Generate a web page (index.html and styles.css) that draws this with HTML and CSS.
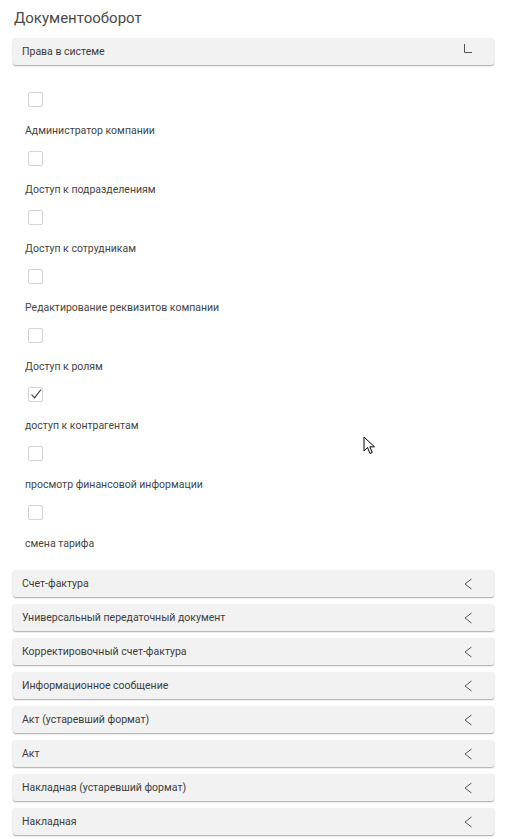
FILE: index.html
```html
<!DOCTYPE html>
<html lang="ru">
<head>
<meta charset="utf-8">
<link rel="stylesheet" href="styles.css">
</head>
<body>
<div class="page">
  <h1 class="title">Документооборот</h1>
  <div class="panel open">
    <div class="bar">
      <span class="bar-text">Права в системе</span>
      <svg class="icon" width="12" height="14" viewBox="0 0 12 14"><path d="M2.5 3 V11.5 H10" fill="none" stroke="#555" stroke-width="1"/></svg>
    </div>
    <div class="list">
      <div class="item"><span class="cb"></span><span class="label">Администратор компании</span></div>
      <div class="item"><span class="cb"></span><span class="label">Доступ к подразделениям</span></div>
      <div class="item"><span class="cb"></span><span class="label">Доступ к сотрудникам</span></div>
      <div class="item"><span class="cb"></span><span class="label">Редактирование реквизитов компании</span></div>
      <div class="item"><span class="cb"></span><span class="label">Доступ к ролям</span></div>
      <div class="item"><span class="cb checked"><svg width="14" height="14" viewBox="0 0 14 14"><path d="M2.5 7.5 L5.5 10.8 L12 2.5" fill="none" stroke="#333" stroke-width="1.1"/></svg></span><span class="label">доступ к контрагентам</span></div>
      <div class="item"><span class="cb"></span><span class="label">просмотр финансовой информации</span></div>
      <div class="item"><span class="cb"></span><span class="label">смена тарифа</span></div>
    </div>
  </div>
  <div class="panel"><div class="bar"><span class="bar-text">Счет-фактура</span><svg class="icon" width="12" height="14" viewBox="0 0 12 14"><path d="M9.5 2 L3 7 L9.5 12" fill="none" stroke="#555" stroke-width="1"/></svg></div></div>
  <div class="panel"><div class="bar"><span class="bar-text">Универсальный передаточный документ</span><svg class="icon" width="12" height="14" viewBox="0 0 12 14"><path d="M9.5 2 L3 7 L9.5 12" fill="none" stroke="#555" stroke-width="1"/></svg></div></div>
  <div class="panel"><div class="bar"><span class="bar-text">Корректировочный счет-фактура</span><svg class="icon" width="12" height="14" viewBox="0 0 12 14"><path d="M9.5 2 L3 7 L9.5 12" fill="none" stroke="#555" stroke-width="1"/></svg></div></div>
  <div class="panel"><div class="bar"><span class="bar-text">Информационное сообщение</span><svg class="icon" width="12" height="14" viewBox="0 0 12 14"><path d="M9.5 2 L3 7 L9.5 12" fill="none" stroke="#555" stroke-width="1"/></svg></div></div>
  <div class="panel"><div class="bar"><span class="bar-text">Акт (устаревший формат)</span><svg class="icon" width="12" height="14" viewBox="0 0 12 14"><path d="M9.5 2 L3 7 L9.5 12" fill="none" stroke="#555" stroke-width="1"/></svg></div></div>
  <div class="panel"><div class="bar"><span class="bar-text">Акт</span><svg class="icon" width="12" height="14" viewBox="0 0 12 14"><path d="M9.5 2 L3 7 L9.5 12" fill="none" stroke="#555" stroke-width="1"/></svg></div></div>
  <div class="panel"><div class="bar"><span class="bar-text">Накладная (устаревший формат)</span><svg class="icon" width="12" height="14" viewBox="0 0 12 14"><path d="M9.5 2 L3 7 L9.5 12" fill="none" stroke="#555" stroke-width="1"/></svg></div></div>
  <div class="panel"><div class="bar"><span class="bar-text">Накладная</span><svg class="icon" width="12" height="14" viewBox="0 0 12 14"><path d="M9.5 2 L3 7 L9.5 12" fill="none" stroke="#555" stroke-width="1"/></svg></div></div>
</div>
<svg class="cursor" width="14" height="20" viewBox="0 0 14 20"><path d="M1 1 L1 15 L4.5 11.5 L7 17.5 L9.3 16.5 L6.8 10.8 L11.5 10.8 Z" fill="#fff" stroke="#000" stroke-width="1" stroke-linejoin="miter"/></svg>
</body>
</html>
```

FILE: styles.css
```css
html, body {
  margin: 0;
  padding: 0;
  background: #fff;
}
body {
  font-family: Roboto, "Noto Sans", "Liberation Sans", sans-serif;
  color: #333;
  position: relative;
}
.page {
  padding: 0 16px 0 13px;
}
.title {
  margin: 0;
  padding: 8px 0 0 1px;
  height: 30px;
  font-size: 15px;
  font-weight: 400;
  line-height: 20px;
  color: #4a4a4a;
}
.panel {
  margin-bottom: 7px;
}
.bar {
  height: 27px;
  background: #f2f2f2;
  border-radius: 3px;
  box-shadow: 0 1px 1.5px rgba(0,0,0,0.35);
  display: flex;
  align-items: center;
  justify-content: space-between;
  padding: 0 20px 0 9px;
}
.bar-text {
  font-size: 10.5px;
  color: #3c3c3c;
}
.icon {
  display: block;
}
.open .bar .icon {
  margin-top: -8px;
}
.list {
  padding: 27px 0 11px 12px;
  display: flex;
  flex-direction: column;
}
.item {
  display: flex;
  flex-direction: column;
  align-items: flex-start;
  margin-bottom: 12px;
}
.item:last-child {
  margin-bottom: 0;
}
.cb {
  width: 13px;
  height: 13px;
  border: 1px solid #d4d4d4;
  border-radius: 2px;
  margin: 0 0 16px 3px;
  position: relative;
}
.cb svg {
  position: absolute;
  left: 0;
  top: -1px;
}
.label {
  font-size: 10.5px;
  line-height: 16px;
  color: #444;
}
.cursor {
  position: absolute;
  left: 363px;
  top: 436px;
}
```
